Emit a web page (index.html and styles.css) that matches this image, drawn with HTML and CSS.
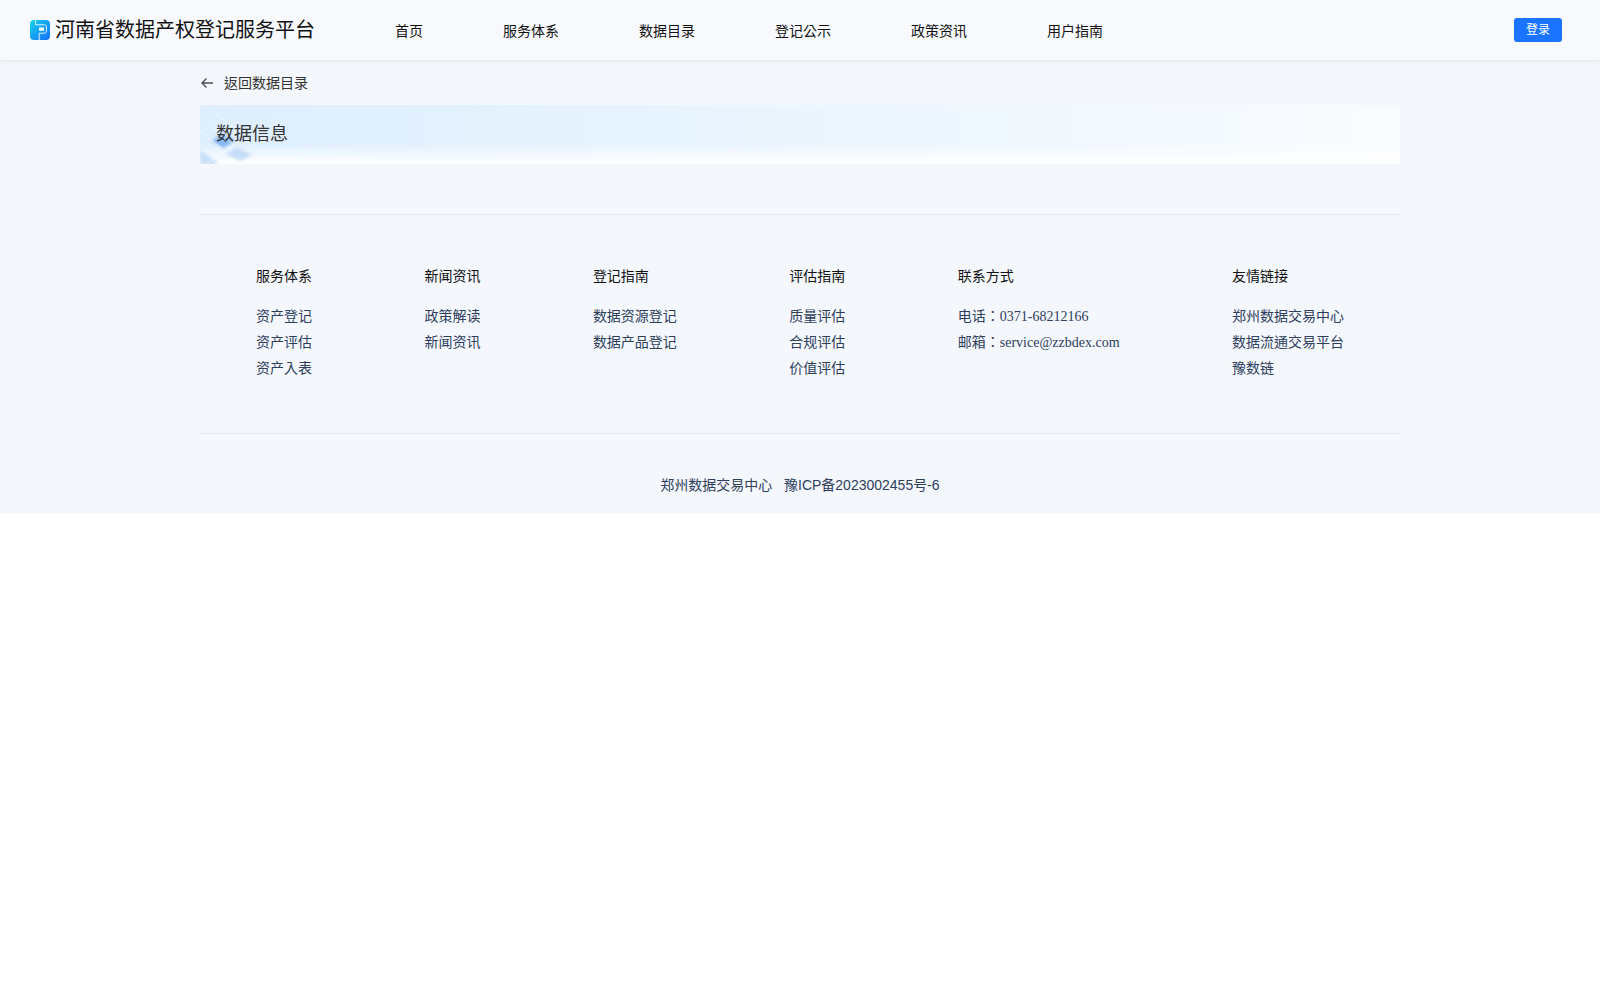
FILE: index.html
```html
<!DOCTYPE html>
<html lang="en">
<head>
  <meta charset="UTF-8" />
  <title>河南省数据产权登记服务平台</title>
  <link rel="stylesheet" href="styles.css">
</head>
<body>
  <div class="page">
    <header class="header">
      <div class="brand">
        <svg class="logo" viewBox="0 0 20 20" width="20" height="20">
          <defs>
            <linearGradient id="logoFill" x1="0" y1="0" x2="1" y2="1">
              <stop offset="0" stop-color="#16d3ee"/>
              <stop offset="1" stop-color="#1670f6"/>
            </linearGradient>
          </defs>
          <rect width="20" height="20" rx="4" fill="url(#logoFill)"/>
          <path d="M5.6 0V4.8H14.4C15.6 4.8 16.4 5.6 16.4 6.8V11.2C16.4 12.4 15.6 13.2 14.4 13.2H9.2V20" fill="none" stroke="#fff" stroke-width="1" opacity="0.85"/>
          <rect x="9" y="7.4" width="5" height="3.4" rx="0.6" fill="#fff"/>
        </svg>
        <span class="brand-name">河南省数据产权登记服务平台</span>
      </div>
      <nav class="nav">
        <a>首页</a>
        <a>服务体系</a>
        <a>数据目录</a>
        <a>登记公示</a>
        <a>政策资讯</a>
        <a>用户指南</a>
      </nav>
      <button class="login">登录</button>
    </header>

    <main class="content">
      <div class="back">
        <svg viewBox="0 0 14 14" width="14" height="14">
          <path d="M13 7H2M6.5 2.5L2 7L6.5 11.5" fill="none" stroke="#4a4f58" stroke-width="1.4"/>
        </svg>
        <span>返回数据目录</span>
      </div>
      <div class="banner">
        <svg class="banner-art" viewBox="0 0 60 60" width="60" height="60">
          <g class="art-blobs" fill="#5f9fec">
            <path d="M12 36L22 29L35 36L23 43Z" opacity="0.7"/>
            <path d="M26 49L37 43L52 50L40 56Z" opacity="0.3"/>
            <path d="M0 46L18 57L14 60H0Z" opacity="0.3"/>
          </g>
          <g fill="none" stroke="#ffffff" stroke-width="1" opacity="0.5">
            <path d="M12 6L44 30M2 14L34 40M0 26L22 44M8 58L42 34"/>
          </g>
        </svg>
        <h2>数据信息</h2>
      </div>

      <footer class="footer">
        <div class="footer-links">
          <div class="col">
            <h4>服务体系</h4>
            <a>资产登记</a>
            <a>资产评估</a>
            <a>资产入表</a>
          </div>
          <div class="col">
            <h4>新闻资讯</h4>
            <a>政策解读</a>
            <a>新闻资讯</a>
          </div>
          <div class="col">
            <h4>登记指南</h4>
            <a>数据资源登记</a>
            <a>数据产品登记</a>
          </div>
          <div class="col">
            <h4>评估指南</h4>
            <a>质量评估</a>
            <a>合规评估</a>
            <a>价值评估</a>
          </div>
          <div class="col contact">
            <h4>联系方式</h4>
            <a>电话：0371-68212166</a>
            <a>邮箱：service@zzbdex.com</a>
          </div>
          <div class="col">
            <h4>友情链接</h4>
            <a>郑州数据交易中心</a>
            <a>数据流通交易平台</a>
            <a>豫数链</a>
          </div>
        </div>
        <div class="copyright">郑州数据交易中心&nbsp;&nbsp;&nbsp;豫ICP备2023002455号-6</div>
      </footer>
    </main>
  </div>
</body>
</html>
```

FILE: styles.css
```css
* {
  box-sizing: border-box;
}

body {
  margin: 0;
  background: #fff;
  font-family: "Liberation Serif", "Noto Sans CJK TC", serif;
  font-size: 14px;
  -webkit-font-smoothing: antialiased;
}

.page {
  height: 514px;
  background: #f4f7fc;
}

.header {
  height: 60px;
  display: flex;
  align-items: center;
  padding: 0 38px 0 30px;
  background: #f7f9fd;
  box-shadow: 0 1px 4px rgba(0, 0, 0, 0.08);
}

.brand {
  display: flex;
  align-items: center;
  gap: 5px;
  width: 365px;
}

.brand-name {
  font-family: "Liberation Sans", "Noto Sans CJK TC", sans-serif;
  font-size: 20px;
  line-height: 24px;
  color: #111;
}

.nav {
  display: flex;
  gap: 80px;
  flex: 1;
  padding-top: 3px;
  line-height: 20px;
  color: #111;
}

.login {
  width: 48px;
  height: 24px;
  padding: 0 0 4px;
  border: none;
  border-radius: 3px;
  background: #1a74ff;
  color: #fff;
  font-family: "Liberation Sans", "Noto Sans CJK TC", sans-serif;
  font-size: 12px;
}

.content {
  width: 1200px;
  margin: 0 auto;
}

.back {
  height: 45px;
  display: flex;
  align-items: center;
  gap: 10px;
  padding-bottom: 1px;
  color: #333;
}

.back svg {
  margin-top: 1px;
}

.banner {
  position: relative;
  height: 59px;
  padding: 17px 16px 0;
  background: linear-gradient(to bottom, rgba(255, 255, 255, 0) 65%, #fff 100%),
    linear-gradient(to right, #ddeefd, #e6f3fe 35%, #f9fcff 100%);
  overflow: hidden;
}

.banner-art {
  position: absolute;
  left: 0;
  top: 0;
}

.art-blobs {
  filter: blur(1.5px);
}

.banner h2 {
  position: relative;
  margin: 0;
  font-family: "Liberation Sans", "Noto Sans CJK TC", sans-serif;
  font-size: 18px;
  font-weight: 400;
  line-height: 24px;
  color: #333;
}

.footer {
  margin-top: 50px;
  border-top: 1px solid #e6e9ef;
}

.footer-links {
  display: flex;
  justify-content: space-between;
  height: 219px;
  padding: 52px 56px 0;
  border-bottom: 1px solid #e6e9ef;
}

.col {
  display: flex;
  flex-direction: column;
  color: #2e3e5c;
}

.col h4 {
  margin: 0 0 17px;
  font-size: 14px;
  font-weight: 400;
  line-height: 20px;
  color: #111;
}

.col a {
  line-height: 26px;
}

.copyright {
  padding-top: 41px;
  font-family: "Liberation Sans", "Noto Sans CJK TC", sans-serif;
  line-height: 20px;
  text-align: center;
  color: #2e3e5c;
}
```
